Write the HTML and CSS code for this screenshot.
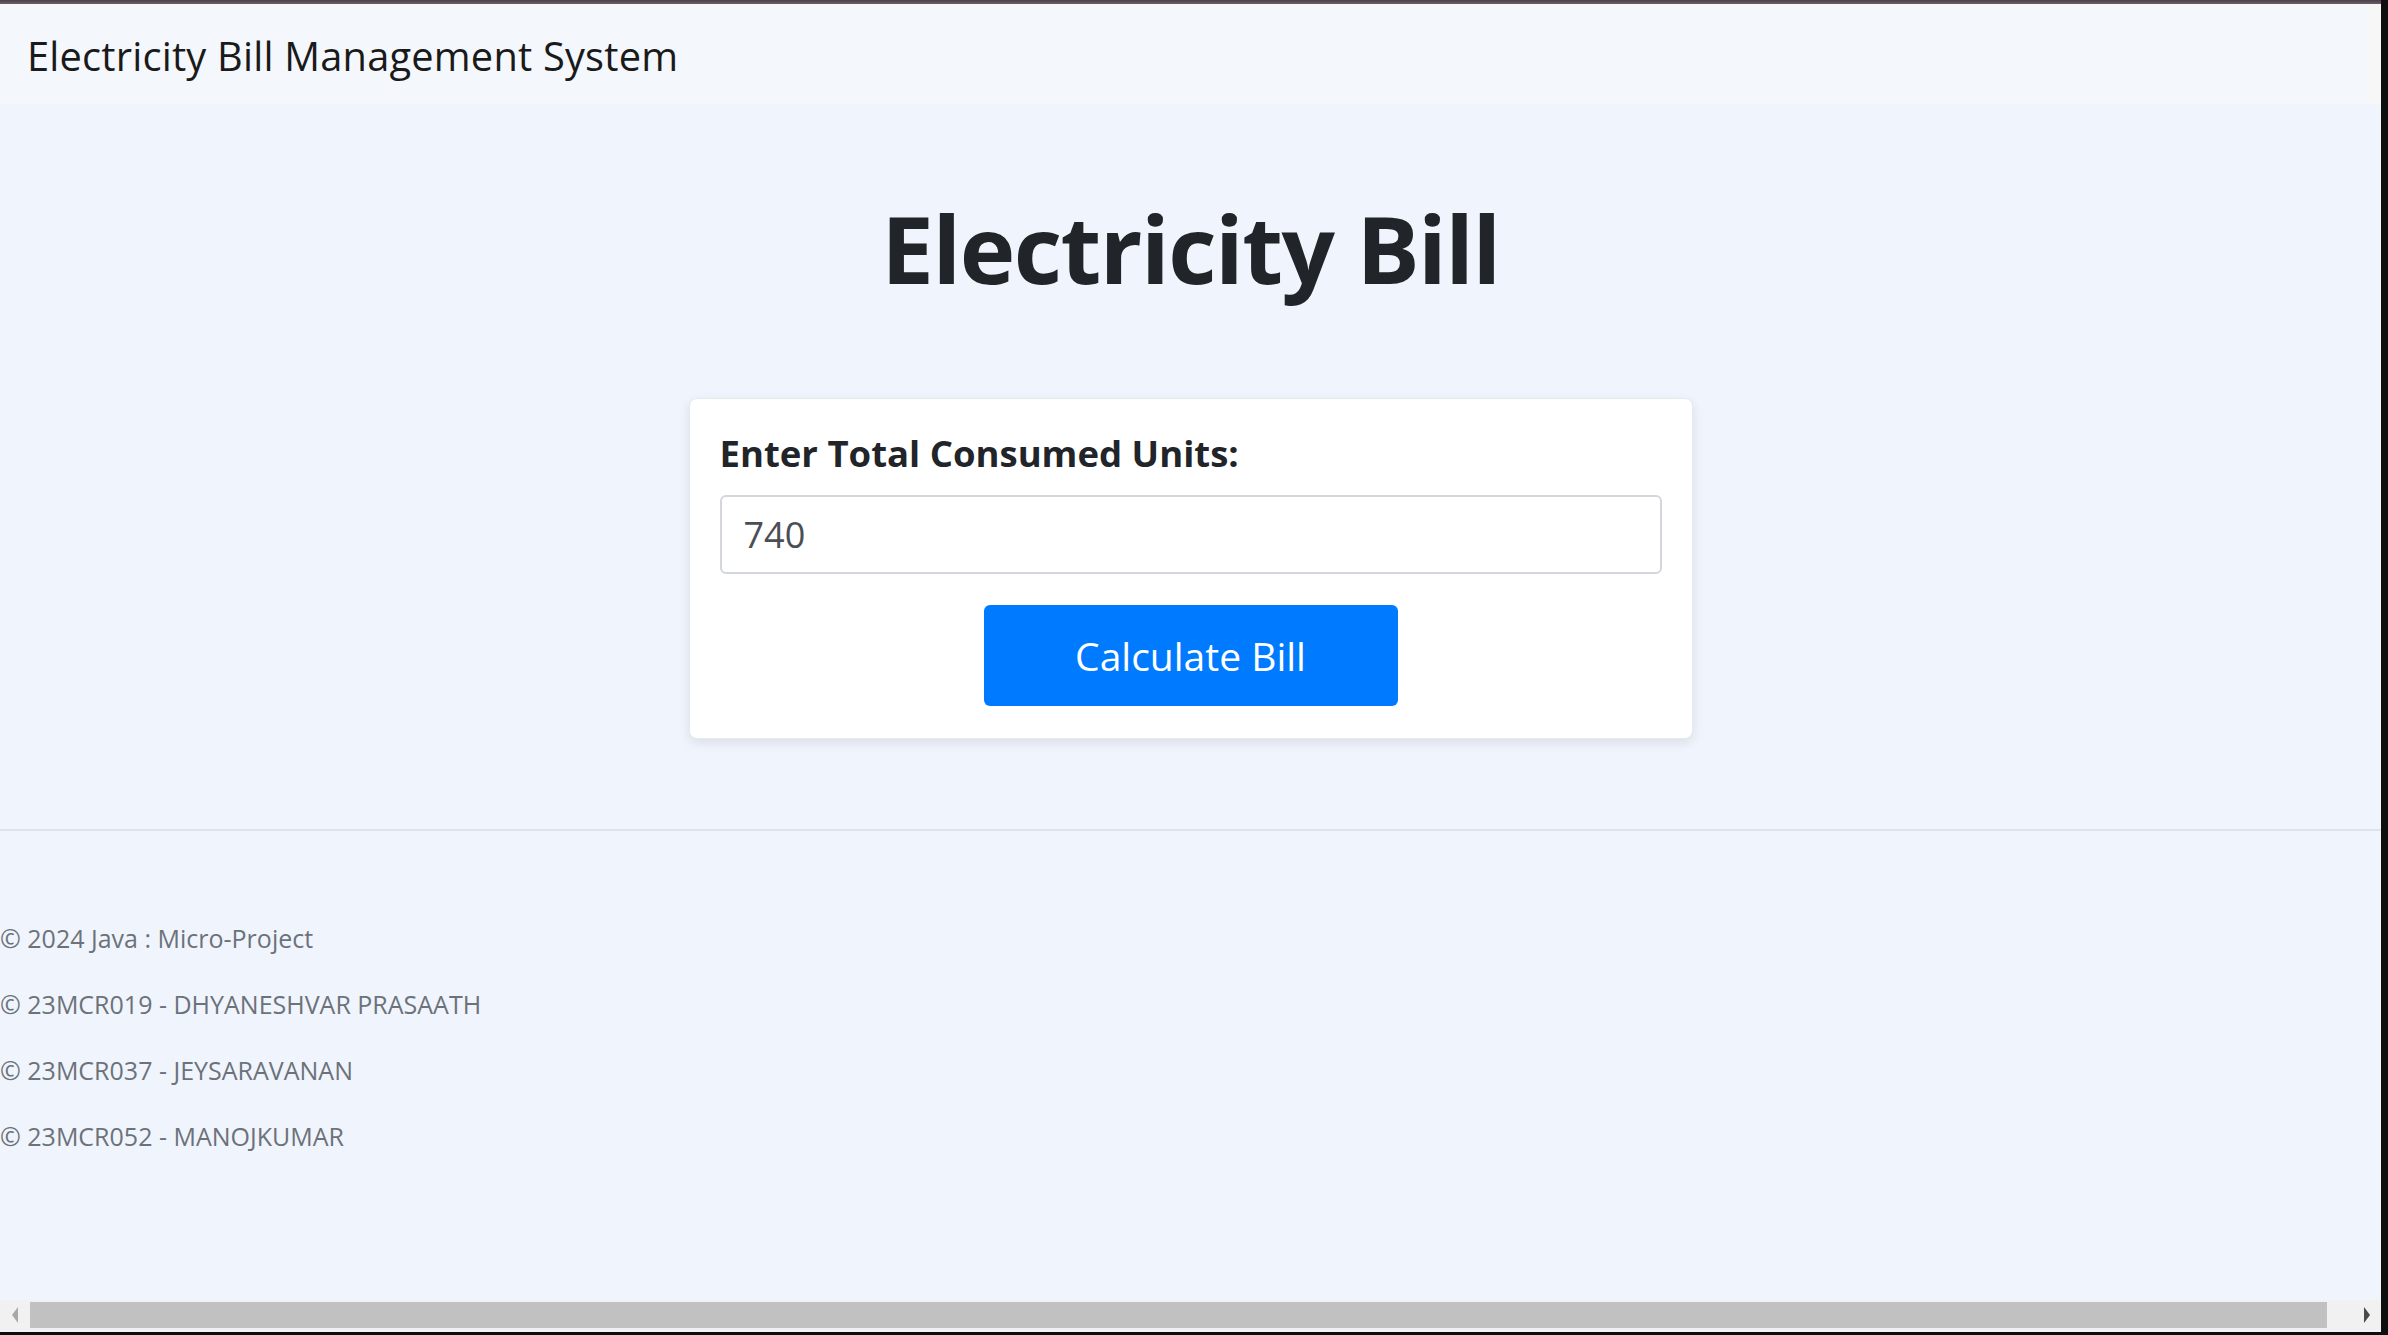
FILE: index.html
```html
<!DOCTYPE html>
<html lang="en">
<head>
<meta charset="utf-8">
<title>Electricity Bill Management System</title>
<link rel="stylesheet" href="styles.css">
</head>
<body>
<div class="screen">
  <div class="row">
    <div class="viewport">
      <div class="topbar"></div>
      <header class="navbar">
        <span class="brand">Electricity Bill Management System</span>
        <span class="navbar-gutter"></span>
      </header>
      <main class="content">
        <h1 class="title">Electricity Bill</h1>
        <form class="card">
          <label class="label" for="units">Enter Total Consumed Units:</label>
          <input class="input" id="units" type="text" value="740">
          <div class="actions">
            <button class="btn" type="button">Calculate Bill</button>
          </div>
        </form>
      </main>
      <div class="divider"></div>
      <footer class="footer">
        <p>© 2024 Java : Micro-Project</p>
        <p>© 23MCR019 - DHYANESHVAR PRASAATH</p>
        <p>© 23MCR037 - JEYSARAVANAN</p>
        <p>© 23MCR052 - MANOJKUMAR</p>
      </footer>
      <div class="spacer"></div>
      <div class="hscroll">
        <div class="arrow-btn arrow-left">
          <svg width="10" height="18" viewBox="0 0 10 18"><path d="M8 1 L2 9 L8 17 Z" fill="#a8a8a8"/></svg>
        </div>
        <div class="thumb"></div>
        <div class="arrow-btn arrow-right">
          <svg width="10" height="18" viewBox="0 0 10 18"><path d="M2 1 L8 9 L2 17 Z" fill="#4a4a4a"/></svg>
        </div>
      </div>
    </div>
    <div class="edge"></div>
  </div>
  <div class="bottomline"></div>
</div>
</body>
</html>
```

FILE: styles.css
```css
html, body {
  margin: 0;
  padding: 0;
}
body {
  width: 2388px;
  height: 1335px;
  overflow: hidden;
  font-family: "Open Sans", "Noto Sans", sans-serif;
  background: #0e0e0e;
}
.screen {
  display: flex;
  flex-direction: column;
  height: 1335px;
}
.row {
  display: flex;
  flex: 1;
  min-height: 0;
}
.viewport {
  flex: 1;
  display: flex;
  flex-direction: column;
  background: #f0f5fd;
  min-width: 0;
}
.edge {
  width: 7px;
  background: #0e0e0e;
}
.bottomline {
  height: 3px;
  background: #0e0e0e;
}
.topbar {
  height: 4px;
  background: linear-gradient(#4b3f4b, #6a5f6a);
}
.navbar {
  height: 100px;
  display: flex;
  align-items: center;
  background: #f4f8fc;
}
.brand {
  flex: 1;
  padding-left: 27px;
  padding-top: 3px;
  font-size: 39.8px;
  color: #1a1a1a;
  letter-spacing: 0.2px;
}
.navbar-gutter {
  width: 12px;
  align-self: stretch;
  background: #f8f7f7;
}
.content {
  display: flex;
  flex-direction: column;
  align-items: center;
}
.title {
  margin: 87px 0 92px;
  font-size: 94px;
  line-height: 115px;
  font-weight: 700;
  color: #212529;
  letter-spacing: -1.5px;
}
.card {
  width: 1004px;
  box-sizing: border-box;
  padding: 30px 30px 32px;
  background: #ffffff;
  border: 1px solid #e6e9ee;
  border-radius: 8px;
  box-shadow: 0 4px 12px rgba(0, 0, 0, 0.09);
  display: flex;
  flex-direction: column;
}
.label {
  font-size: 36.5px;
  line-height: 48px;
  font-weight: 700;
  color: #212529;
  margin-bottom: 18px;
}
.input {
  height: 79px;
  box-sizing: border-box;
  border: 2px solid #d3d6da;
  border-radius: 6px;
  padding: 0 22px;
  font-family: inherit;
  font-size: 36px;
  color: #4a4f55;
  background: #fff;
  outline: none;
}
.actions {
  display: flex;
  justify-content: center;
  margin-top: 31px;
}
.btn {
  width: 414px;
  height: 101px;
  border: none;
  border-radius: 6px;
  background: #007bff;
  color: #ffffff;
  font-family: inherit;
  font-size: 39px;
  cursor: pointer;
}
.divider {
  margin-top: 90px;
  height: 2px;
  background: #dde3ea;
}
.footer {
  padding-top: 87px;
}
.footer p {
  margin: 0 0 25px;
  font-size: 25px;
  line-height: 41px;
  color: #6c727a;
}
.spacer {
  flex: 1;
}
.hscroll {
  height: 30px;
  margin-bottom: 2px;
  display: flex;
  align-items: stretch;
  background: #f1f1f1;
}
.arrow-btn {
  display: flex;
  align-items: center;
}
.arrow-left {
  width: 30px;
  justify-content: center;
}
.arrow-right {
  width: 54px;
  justify-content: flex-end;
  padding-right: 9px;
  box-sizing: border-box;
}
.thumb {
  flex: 1;
  background: #c1c1c1;
  margin: 2px 0;
}
```
